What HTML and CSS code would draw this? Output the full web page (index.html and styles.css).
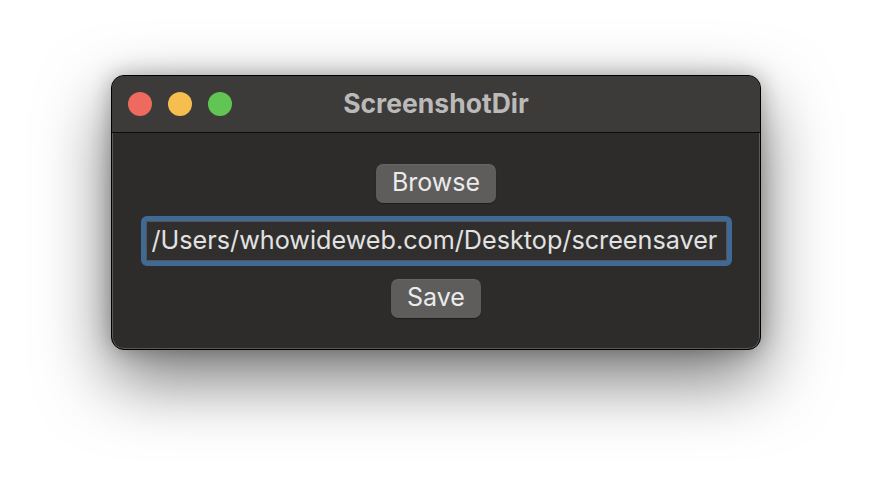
FILE: index.html
```html
<!DOCTYPE html>
<html>
<head>
<meta charset="utf-8">
<link rel="stylesheet" href="styles.css">
</head>
<body>
<div class="stage">
  <div class="window">
    <div class="titlebar">
      <div class="lights">
        <span class="light red"></span>
        <span class="light yellow"></span>
        <span class="light green"></span>
      </div>
      <div class="title">ScreenshotDir</div>
    </div>
    <div class="content">
      <button class="btn btn-browse">Browse</button>
      <div class="field"><div class="field-inner">/Users/whowideweb.com/Desktop/screensaver</div></div>
      <button class="btn btn-save">Save</button>
    </div>
  </div>
</div>
</body>
</html>
```
FILE: styles.css
```css
html, body {
  margin: 0;
  padding: 0;
  background: #ffffff;
  width: 872px;
  height: 498px;
  overflow: hidden;
}
.stage {
  padding: 75px 0 0 111px;
}
.window {
  width: 650px;
  height: 275px;
  box-sizing: border-box;
  border-radius: 13px;
  background: #2d2c2b;
  border: 1px solid #000;
  box-shadow: inset 0 0 0 1px #5a5958, 0 28px 70px rgba(0,0,0,0.55), 0 0 22px rgba(0,0,0,0.28);
  overflow: hidden;
  display: flex;
  flex-direction: column;
  font-family: Inter, "Noto Sans", sans-serif;
}
.titlebar {
  height: 56px;
  flex: none;
  background: #3c3b3a;
  border-bottom: 1px solid #0d0d0d;
  position: relative;
  display: flex;
  align-items: center;
  justify-content: center;
}
.lights {
  position: absolute;
  left: 16px;
  top: 16px;
  display: flex;
  gap: 16px;
}
.light {
  width: 24px;
  height: 24px;
  border-radius: 50%;
  display: block;
}
.red { background: #ee6a5f; }
.yellow { background: #f5be4f; }
.green { background: #61c554; }
.title {
  color: #bbbab9;
  font-weight: 700;
  font-size: 26.5px;
  margin-top: -2px;
}
.content {
  flex: 1;
  display: flex;
  flex-direction: column;
  align-items: center;
  padding-top: 31px;
}
.btn {
  font-family: Inter, "Noto Sans", sans-serif;
  background: #5e5d5c;
  color: #ebebeb;
  border: none;
  border-radius: 7px;
  font-size: 25px;
  height: 39px;
  padding: 0 0 3px;
  box-shadow: 0 1px 1px rgba(0,0,0,0.35), inset 0 1px 0 rgba(255,255,255,0.06);
}
.btn-browse { width: 120px; }
.btn-save { width: 90px; margin-top: 13px; }
.field {
  margin-top: 13px;
  width: 591px;
  height: 50px;
  box-sizing: border-box;
  border: 5px solid #3f6a95;
  border-radius: 6px;
  background: #3f6a95;
}
.field-inner {
  height: 40px;
  box-sizing: border-box;
  background: #302f2e;
  border: 1px solid #555;
  color: #e2e2e2;
  font-size: 25.2px;
  line-height: 37px;
  padding-left: 5px;
  white-space: nowrap;
  overflow: hidden;
}
```
